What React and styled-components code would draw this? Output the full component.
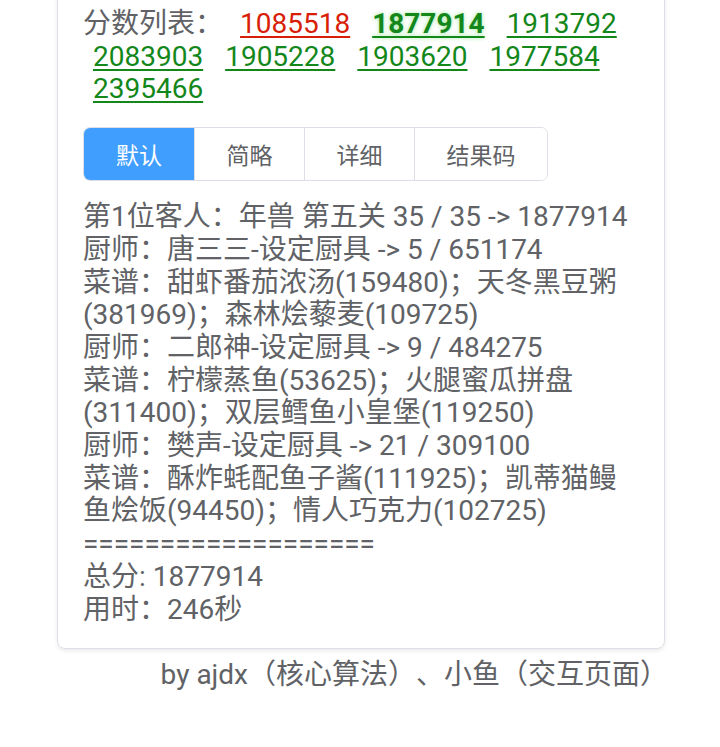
import React, { useState } from "react";
import styled, { createGlobalStyle } from "styled-components";

const GlobalStyle = createGlobalStyle`
  body {
    margin: 0;
    background: #fff;
    font-family: Roboto, "Noto Sans CJK SC", sans-serif;
    color: #606266;
    text-spacing-trim: space-all;
  }
`;

const Page = styled.div`
  width: 720px;
  overflow: hidden;
`;

const Card = styled.div`
  margin: -30px 55px 0 57px;
  padding: 37px 25px 22px;
  border: 1px solid #dcdfe6;
  border-radius: 8px;
  box-shadow: 0 2px 4px rgba(0, 0, 0, 0.08);
  font-size: 28px;
  line-height: 32.7px;
`;

const ScoreList = styled.div`
  display: flex;
  flex-wrap: wrap;
  column-gap: 12px;
`;

const Label = styled.span`
  margin-right: -5px;
`;

const ScoreLink = styled.a`
  margin-left: 10px;
  color: ${p => (p.red ? "#d81e06" : "#14871b")};
  font-weight: ${p => (p.best ? 700 : 400)};
  text-shadow: ${p => (p.best ? "0 0 4px rgba(40, 200, 40, 0.45)" : "none")};
  text-decoration: underline;
  text-decoration-thickness: 2px;
  text-underline-offset: 3px;
  cursor: pointer;
`;

const Tabs = styled.div`
  display: inline-flex;
  margin: 21px 0 20px;
  border: 1px solid #dcdfe6;
  border-radius: 7px;
  overflow: hidden;
`;

const Tab = styled.button`
  width: ${p => p.w}px;
  height: 52px;
  border: none;
  border-left: ${p => (p.first ? "none" : "1px solid #dcdfe6")};
  background: ${p => (p.active ? "#409eff" : "#fff")};
  color: ${p => (p.active ? "#fff" : "#606266")};
  font-family: Roboto, "Noto Sans CJK SC", sans-serif;
  font-size: 23px;
  cursor: pointer;
  padding: 0;
`;

const Result = styled.div`
  white-space: pre-wrap;
`;

const Footer = styled.div`
  padding: 10px 52px 0 0;
  text-align: right;
  font-size: 28px;
  line-height: 32px;
  color: #606266;
`;

const scores = [
  { v: "1085518", red: true },
  { v: "1877914", best: true },
  { v: "1913792" },
  { v: "2083903" },
  { v: "1905228" },
  { v: "1903620" },
  { v: "1977584" },
  { v: "2395466" },
];

const tabs = [
  { label: "默认", w: 110 },
  { label: "简略", w: 110 },
  { label: "详细", w: 110 },
  { label: "结果码", w: 133 },
];

const lines = [
  "第1位客人：年兽 第五关 35 / 35 -> 1877914",
  "厨师：唐三三-设定厨具 -> 5 / 651174",
  "菜谱：甜虾番茄浓汤(159480)；天冬黑豆粥(381969)；森林烩藜麦(109725)",
  "厨师：二郎神-设定厨具 -> 9 / 484275",
  "菜谱：柠檬蒸鱼(53625)；火腿蜜瓜拼盘(311400)；双层鳕鱼小皇堡(119250)",
  "厨师：樊声-设定厨具 -> 21 / 309100",
  "菜谱：酥炸蚝配鱼子酱(111925)；凯蒂猫鳗鱼烩饭(94450)；情人巧克力(102725)",
  "===================",
  "总分: 1877914",
  "用时：246秒",
];

export default function App() {
  const [active, setActive] = useState(0);
  return (
    <Page>
      <GlobalStyle />
      <Card>
        <ScoreList>
          <Label>分数列表：</Label>
          {scores.map(s => (
            <ScoreLink key={s.v} red={s.red} best={s.best}>
              {s.v}
            </ScoreLink>
          ))}
        </ScoreList>
        <Tabs>
          {tabs.map((t, i) => (
            <Tab
              key={t.label}
              w={t.w}
              first={i === 0}
              active={active === i}
              onClick={() => setActive(i)}
            >
              {t.label}
            </Tab>
          ))}
        </Tabs>
        <Result>
          {lines.map((l, i) => (
            <div key={i}>{l}</div>
          ))}
        </Result>
      </Card>
      <Footer>by ajdx（核心算法）、小鱼（交互页面）</Footer>
    </Page>
  );
}
